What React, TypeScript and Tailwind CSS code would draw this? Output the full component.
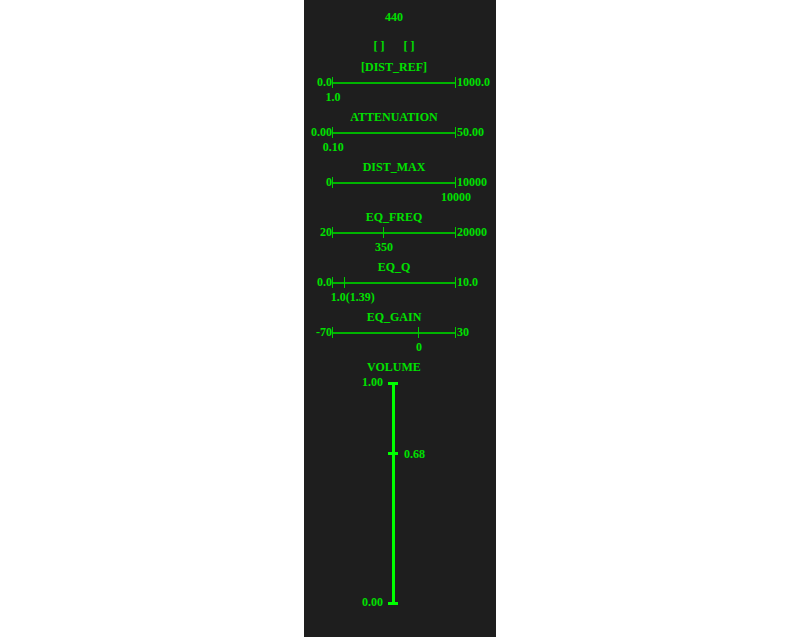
import React from "react";

type Slider = {
  name: string;
  min: string;
  max: string;
  value: string;
  pos: number; // 0..1 along the track
  labelPos?: number;
};

const sliders: Slider[] = [
  { name: "[DIST_REF]", min: "0.0", max: "1000.0", value: "1.0", pos: 0.001 },
  { name: "ATTENUATION", min: "0.00", max: "50.00", value: "0.10", pos: 0.002 },
  { name: "DIST_MAX", min: "0", max: "10000", value: "10000", pos: 1 },
  { name: "EQ_FREQ", min: "20", max: "20000", value: "350", pos: 0.414 },
  { name: "EQ_Q", min: "0.0", max: "10.0", value: "1.0(1.39)", pos: 0.1, labelPos: 0.16 },
  { name: "EQ_GAIN", min: "-70", max: "30", value: "0", pos: 0.7 },
];

const HSlider = ({ s }: { s: Slider }) => {
  const showTick = s.pos > 0.01 && s.pos < 0.99;
  const lp = s.labelPos ?? s.pos;
  return (
    <div className="flex flex-col mb-[6px]">
      <div className="h-[14px] leading-[14px] pl-[28px] w-[152px] text-center whitespace-nowrap">
        {s.name}
      </div>
      <div className="flex h-[16px] items-center">
        <div className="w-[28px] text-right leading-[16px]">{s.min}</div>
        <div className="relative w-[124px] h-[16px] flex items-center">
          <div className="absolute left-0 top-[3px] w-px h-[11px] bg-[#00cc00]" />
          <div className="w-full h-[2px] bg-[#00b400] mt-[2px]" />
          <div className="absolute right-0 top-[3px] w-px h-[11px] bg-[#00cc00]" />
          {showTick && (
            <div
              className="absolute top-[3px] w-px h-[11px] bg-[#00cc00]"
              style={{ left: `${s.pos * 123}px` }}
            />
          )}
        </div>
        <div className="pl-px leading-[16px]">{s.max}</div>
      </div>
      <div className="relative h-[14px] ml-[28px] w-[124px]">
        <div
          className="absolute top-0 leading-[14px] -translate-x-1/2 whitespace-nowrap"
          style={{ left: `${lp * 123 + 1}px` }}
        >
          {s.value}
        </div>
      </div>
    </div>
  );
};

export default function App() {
  const vol = 0.68;
  const tickTop = Math.round(229 - vol * 220 - 1);
  return (
    <div className="w-[800px] h-[637px] bg-white flex justify-center">
      <div
        className="w-[192px] h-[637px] bg-[#1e1e1e] text-[#00e000] text-[12px] font-bold flex flex-col pt-[10px]"
        style={{ fontFamily: '"Liberation Serif", "Times New Roman", serif' }}
      >
        <div className="h-[14px] leading-[14px] pl-[28px] w-[152px] text-center">440</div>
        <div className="h-[14px] leading-[14px] mt-[15px] pl-[28px] w-[152px] flex justify-center gap-[19px]">
          <span>[ ]</span>
          <span>[ ]</span>
        </div>
        <div className="h-[7px]" />
        {sliders.map((s) => (
          <HSlider key={s.name} s={s} />
        ))}

        {/* VOLUME */}
        <div className="h-[14px] leading-[14px] pl-[28px] w-[152px] text-center">VOLUME</div>
        <div className="relative h-[236px] ml-[58px] w-[120px]">
          <div className="absolute left-[30px] top-[8px] w-[3px] h-[221px] bg-[#00ff00]" />
          <div className="absolute left-[26px] top-[8px] w-[10px] h-[3px] bg-[#00ff00]" />
          <div className="absolute left-[26px] top-[228px] w-[10px] h-[3px] bg-[#00ff00]" />
          <div
            className="absolute left-[26px] w-[10px] h-[3px] bg-[#00ff00]"
            style={{ top: `${tickTop}px` }}
          />
          <div className="absolute right-[99px] top-[1px] leading-[14px]">1.00</div>
          <div className="absolute right-[99px] top-[221px] leading-[14px]">0.00</div>
          <div
            className="absolute left-[42px] leading-[14px]"
            style={{ top: `${tickTop - 5}px` }}
          >
            {vol.toFixed(2)}
          </div>
        </div>
      </div>
    </div>
  );
}
